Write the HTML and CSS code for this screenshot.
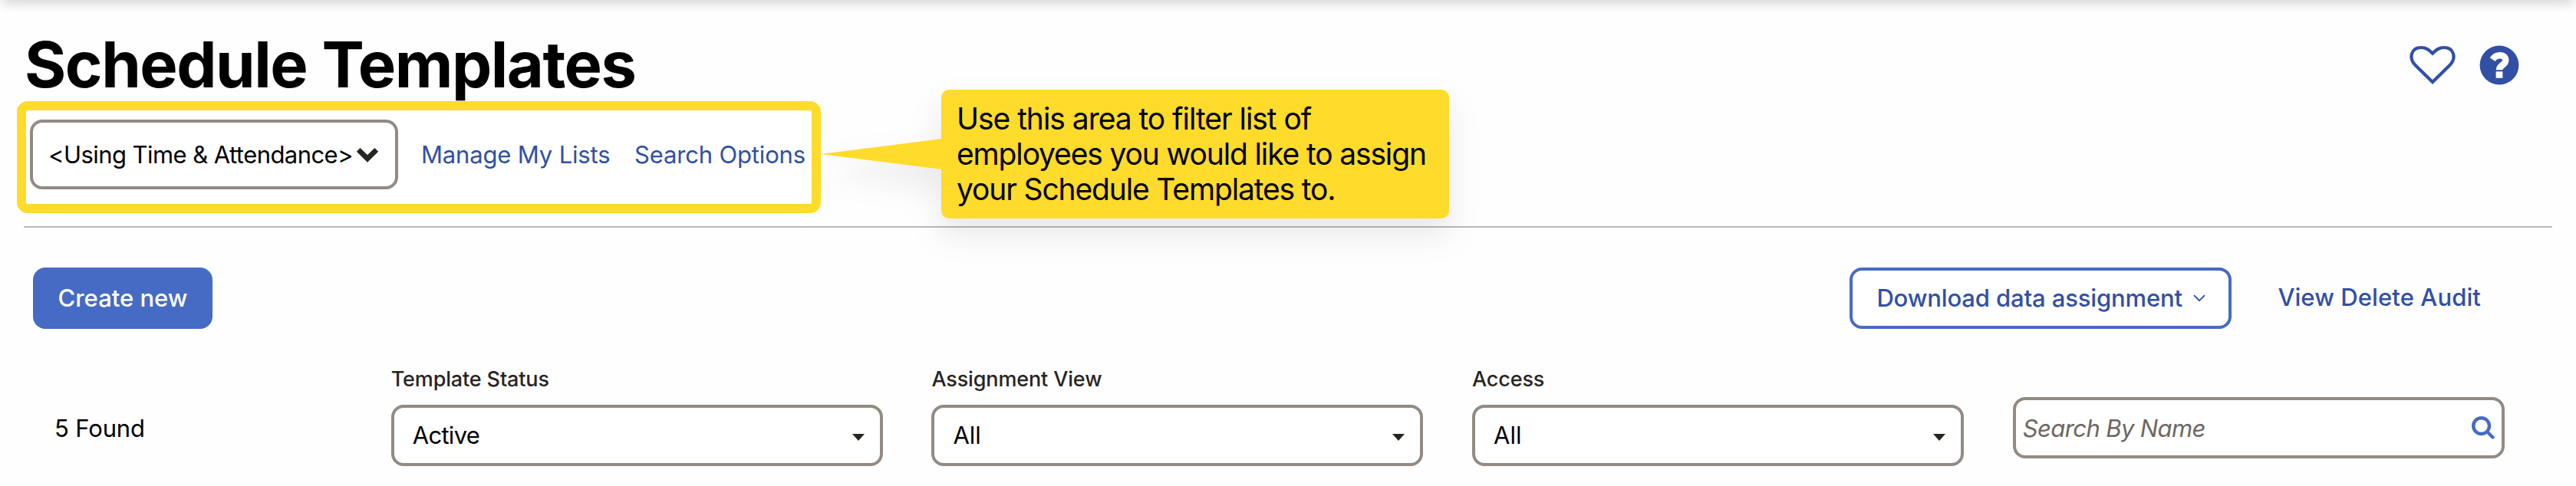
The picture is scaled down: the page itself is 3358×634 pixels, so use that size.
FILE: index.html
```html
<!DOCTYPE html>
<html lang="en">
<head>
<meta charset="utf-8">
<title>Schedule Templates</title>
<link rel="stylesheet" href="styles.css">
</head>
<body>
<div class="top-shadow"></div>
<header class="page-header">
  <div class="heading">
    <h1 class="title">Schedule Templates</h1>
    <div class="employee-filter">
      <div class="list-select">
        <span class="list-name">&lt;Using Time &amp; Attendance&gt;</span>
        <svg class="list-chevron" viewBox="0 0 30 20"><path d="M3.2 3.4 L15 15 L26.8 3.4" fill="none" stroke="#282422" stroke-width="6.8"/></svg>
      </div>
      <a class="link manage">Manage My Lists</a>
      <a class="link options">Search Options</a>
    </div>
    <div class="callout">
      <svg class="callout-tail" viewBox="0 0 158 40"><path d="M0 20 L158 0 V40 Z" fill="#ffdb2c"/></svg>
      <p class="callout-text"><span class="callout-first">Use this area to filter list of</span><br>employees you would like to assign<br>your Schedule Templates to.</p>
    </div>
  </div>
  <div class="header-icons">
    <svg class="heart" viewBox="0 0 60 52"><path d="M30 48 L8 26.5 C-2 16.5 2.5 3 15 3 C22 3 25.5 6.400 30 10.600 C34.500 6.400 38 3 45 3 C57.500 3 62 16.500 52 26.500 Z" fill="none" stroke="#314fa5" stroke-width="4.200"/></svg>
    <svg class="help" viewBox="0 0 52 52"><circle cx="26" cy="26" r="25.400" fill="#314fa5"/><path d="M17.2 18.600 C22 11.200 34.300 11.200 34.300 19.800 C34.300 26 26 25.500 26 32.200" fill="none" stroke="#fff" stroke-width="8.400"/><rect x="21.600" y="34.300" width="8.800" height="8.500" fill="#fff"/></svg>
  </div>
</header>
<main>
  <div class="toolbar">
    <button class="create">Create new</button>
    <div class="toolbar-right">
      <button class="download">Download data assignment
        <svg class="download-chevron" viewBox="0 0 16 10"><path d="M1 1.200 L8 8.200 L15 1.200" fill="none" stroke="#314fa5" stroke-width="1.800"/></svg>
      </button>
      <a class="audit">View Delete Audit</a>
    </div>
  </div>
  <div class="filters">
    <div class="found">5 Found</div>
    <div class="field">
      <div class="label">Template Status</div>
      <div class="select"><span class="value active">Active</span><svg class="caret" viewBox="0 0 16 9"><path d="M0 0 H16 L8 9 Z" fill="#282422"/></svg></div>
    </div>
    <div class="field">
      <div class="label">Assignment View</div>
      <div class="select"><span class="value">All</span><svg class="caret" viewBox="0 0 16 9"><path d="M0 0 H16 L8 9 Z" fill="#282422"/></svg></div>
    </div>
    <div class="field">
      <div class="label">Access</div>
      <div class="select"><span class="value">All</span><svg class="caret" viewBox="0 0 16 9"><path d="M0 0 H16 L8 9 Z" fill="#282422"/></svg></div>
    </div>
    <div class="search">
      <span class="placeholder">Search By Name</span>
      <svg class="magnifier" viewBox="0 0 30 30"><circle cx="12.600" cy="12.600" r="10.400" fill="none" stroke="#466bc4" stroke-width="4.400"/><path d="M20.500 20.500 L27.500 27.500" stroke="#466bc4" stroke-width="4.200" stroke-linecap="round"/></svg>
    </div>
  </div>
</main>
</body>
</html>
```
FILE: styles.css
```css
* { box-sizing: border-box; }
body {
  margin: 0;
  height: 634px;
  overflow: hidden;
  position: relative;
  background: #fefefe;
  font-family: Inter, "Liberation Sans", sans-serif;
  font-size: 31px;
  line-height: 38px;
  color: #000;
}
svg { display: block; flex: none; }
.top-shadow {
  position: absolute;
  top: -10px;
  left: 4px;
  right: 4px;
  height: 10px;
  box-shadow: 0 2px 16px rgba(0, 0, 0, .26);
}
.page-header {
  display: flex;
  justify-content: space-between;
  margin: 0 31px;
  height: 297px;
  padding-top: 39px;
  border-bottom: 2px solid #b9b9b9;
}
.heading { position: relative; width: 1039px; }
.title {
  margin: 0;
  padding-left: 1px;
  font-size: 83px;
  line-height: 90px;
  font-weight: 700;
  letter-spacing: -1.5px;
  word-spacing: 1px;
  white-space: nowrap;
}
.employee-filter {
  display: flex;
  align-items: flex-start;
  margin: 3px 0 0 -9px;
  width: 1048px;
  height: 146px;
  border: 12px solid #ffdb2c;
  border-radius: 14px;
  padding: 12px 0 0 5px;
  background: #fff;
  white-space: nowrap;
}
.list-select {
  display: flex;
  align-items: center;
  flex: none;
  width: 480px;
  height: 91px;
  border: 4px solid #938b83;
  border-radius: 16px;
  padding-left: 20px;
}
.list-name {
  flex: none;
  width: 396px;
  letter-spacing: -.56px;
}
.list-chevron { width: 30px; height: 20px; margin-left: 5px; }
.link { color: #314fa5; line-height: 91px; letter-spacing: -.16px; }
.manage { width: 278px; margin-left: 30px; flex: none; }
.callout {
  position: absolute;
  left: 1196px;
  top: 78px;
  width: 662px;
  height: 168px;
  border-radius: 10px;
  padding: 15px 0 0 20px;
  background: #ffdb2c;
  filter: drop-shadow(0 20px 20px rgba(0, 0, 0, .09));
}
.callout-tail {
  position: absolute;
  left: -157px;
  top: 64px;
  width: 158px;
  height: 40px;
}
.callout-text {
  margin: 0;
  font-size: 39px;
  line-height: 46px;
  letter-spacing: -1.15px;
  white-space: nowrap;
}
.callout-first { letter-spacing: -1.04px; }
.header-icons { display: flex; gap: 31px; padding: 20px 43px 0 0; }
.heart { width: 60px; height: 52px; }
.help { width: 52px; height: 52px; }
.toolbar {
  display: flex;
  justify-content: space-between;
  padding: 52px 124px 0 43px;
}
button {
  font: 500 31px/38px Inter, "Liberation Sans", sans-serif;
  height: 80px;
  border-radius: 16px;
  border: 0;
  margin: 0;
}
.create { width: 234px; padding: 0; background: #466bc4; color: #fff; }
.toolbar-right { display: flex; gap: 60px; }
.download {
  display: flex;
  align-items: center;
  width: 498px;
  padding: 0 0 0 31px;
  border: 4px solid #466bc4;
  background: #fff;
  color: #314fa5;
  letter-spacing: -.13px;
}
.download-chevron { width: 16px; height: 10px; margin-left: 14px; }
.audit { color: #314fa5; font-weight: 500; line-height: 78px; letter-spacing: .1px; }
.filters {
  display: grid;
  grid-template-columns: 439px repeat(4, 641px);
  column-gap: 63.7px;
  padding: 51px 0 0 7px;
}
.filters > .found { padding: 60px 0 0 64px; letter-spacing: -.15px; }
.label {
  height: 48px;
  padding-top: 1px;
  font-size: 27px;
  line-height: 28px;
  font-weight: 500;
  letter-spacing: -.14px;
  color: #282422;
}
.select, .search {
  display: flex;
  align-items: center;
  justify-content: space-between;
  width: 641px;
  height: 80px;
  border: 4px solid #938b83;
  border-radius: 16px;
  background: #fff;
}
.select { padding: 0 20px 0 24px; }
.active { letter-spacing: -.7px; }
.caret { width: 16px; height: 9px; margin-top: 5px; }
.search { margin-top: 38px; padding: 0 9px 0 9px; }
.placeholder { padding-top: 1px; color: #6e6760; font-style: italic; letter-spacing: -.6px; }
.magnifier { width: 30px; height: 30px; }
```
